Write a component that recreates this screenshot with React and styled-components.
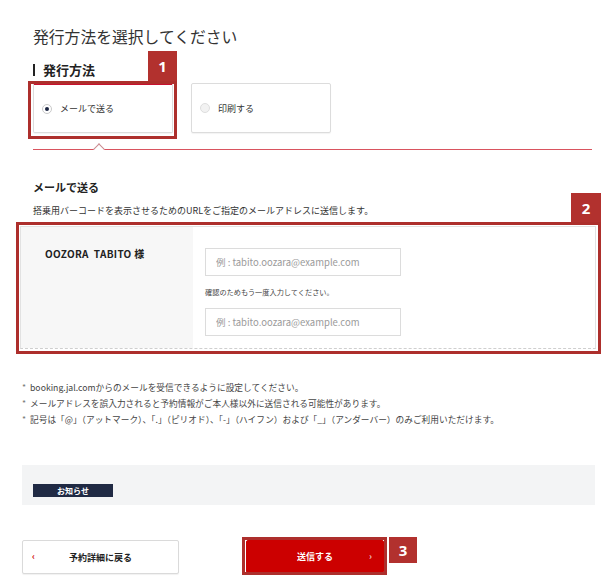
import styled, { createGlobalStyle } from "styled-components";

const GlobalStyle = createGlobalStyle`
  body {
    margin: 0;
    background: #fff;
    font-family: "Noto Sans CJK JP", "Noto Sans", sans-serif;
    color: #333;
  }
`;

const Page = styled.div`
  width: 616px;
  height: 582px;
  overflow: hidden;
  padding: 0 20px;
  box-sizing: border-box;
`;

const Header = styled.div`
  padding-left: 13px;
  padding-right: 4px;
`;

const Title = styled.h1`
  margin: 27px 0 0;
  font-size: 15.8px;
  line-height: 20px;
  font-weight: 400;
  color: #333;
`;

const SectionHeading = styled.h2`
  margin: 14px 0 0;
  display: flex;
  align-items: center;
  gap: 8px;
  font-size: 13px;
  line-height: 18px;
  font-weight: 700;
  color: #222;

  &::before {
    content: "";
    width: 2px;
    height: 12px;
    background: #222;
  }
`;

const CardRow = styled.div`
  margin-top: 4px;
  display: flex;
  gap: 18px;
`;

const Annotated = styled.div`
  position: relative;
`;

const Frame = styled.div`
  position: absolute;
  inset: ${(p) => p.$inset};
  border: 3px solid #ad2f2c;
  pointer-events: none;
`;

const Badge = styled.div`
  position: absolute;
  width: ${(p) => p.$w}px;
  height: ${(p) => p.$h}px;
  background: #b2312e;
  color: #fff;
  font-family: "Noto Sans", sans-serif;
  font-weight: 700;
  font-size: 15px;
  display: flex;
  align-items: center;
  justify-content: center;
  ${(p) => p.$pos}
`;

const MethodCard = styled.div`
  width: 140px;
  height: 50px;
  box-sizing: border-box;
  border: 1px solid #dcdcdc;
  border-top: ${(p) => (p.$selected ? "2px solid #c8102e" : "1px solid #dcdcdc")};
  border-radius: 2px;
  background: #fff;
  display: flex;
  align-items: center;
  padding-left: 8px;
  gap: 8px;
  font-size: 9px;
  color: #333;
  box-shadow: 0 1px 1px rgba(0, 0, 0, 0.05);
`;

const Radio = styled.span`
  width: 10px;
  height: 10px;
  border-radius: 50%;
  box-sizing: border-box;
  border: 1px solid ${(p) => (p.$checked ? "#c9c9c9" : "#dedede")};
  background: ${(p) => (p.$checked ? "#fff" : "#f2f2f2")};
  display: flex;
  align-items: center;
  justify-content: center;

  &::after {
    content: "";
    width: 4px;
    height: 4px;
    border-radius: 50%;
    background: ${(p) => (p.$checked ? "#1c2541" : "transparent")};
  }
`;

const Divider = styled.div`
  position: relative;
  margin-top: 16px;
  height: 1px;
  background: #d9545f;

  &::after {
    content: "";
    position: absolute;
    left: 62px;
    top: -4px;
    width: 7px;
    height: 7px;
    background: #fff;
    border-top: 1px solid #c98a8f;
    border-left: 1px solid #c98a8f;
    transform: rotate(45deg);
  }
`;

const SubHeading = styled.h3`
  margin: 30px 0 0;
  font-size: 11px;
  line-height: 14px;
  font-weight: 700;
  color: #222;
`;

const Description = styled.p`
  margin: 10px 0 0;
  font-size: 9px;
  line-height: 14px;
  color: #333;
`;

const FormBox = styled.div`
  margin-top: 8px;
  display: flex;
  border: 1px solid #e2e2e2;
  border-bottom: 1px dashed #cfcfcf;
  height: 123px;
  box-sizing: border-box;
`;

const NameCell = styled.div`
  width: 172px;
  background: #f7f7f7;
  padding: 20px 0 0 24px;
  box-sizing: border-box;
  font-size: 10px;
  line-height: 14px;
  font-weight: 700;
  color: #222;
  letter-spacing: 0.3px;
`;

const FieldCell = styled.div`
  flex: 1;
  padding: 21px 0 0 12px;
  background: #fff;
`;

const EmailInput = styled.input`
  display: block;
  width: 196px;
  height: 28px;
  box-sizing: border-box;
  border: 1px solid #dcdcdc;
  padding: 0 10px;
  font-family: "Noto Sans CJK JP", "Noto Sans", sans-serif;
  font-size: 9.5px;
  outline: none;

  &::placeholder {
    color: #9a9a9a;
  }
`;

const Hint = styled.p`
  margin: 0;
  padding: 10px 0 0;
  height: 32px;
  box-sizing: border-box;
  font-size: 7.2px;
  line-height: 12px;
  color: #444;
`;

const Notes = styled.ul`
  margin: 31px 0 0 2px;
  padding: 0;
  list-style: none;
`;

const Note = styled.li`
  font-size: 8.7px;
  line-height: 16px;
  color: #444;
  display: flex;

  &::before {
    content: "*";
    width: 8px;
    color: #777;
  }
`;

const NoticeBox = styled.div`
  margin: 37px 1px 0 2px;
  height: 40px;
  background: #f3f4f5;
  padding: 10px 0 0 11px;
  box-sizing: border-box;
`;

const NoticeLabel = styled.span`
  display: inline-flex;
  align-items: center;
  justify-content: center;
  width: 80px;
  height: 13px;
  background: #202a44;
  color: #fff;
  font-size: 8px;
  font-weight: 700;
`;

const ButtonRow = styled.div`
  margin: 35px 0 0 2px;
  display: flex;
  align-items: flex-start;
  gap: 67px;
`;

const Button = styled.button`
  position: relative;
  width: ${(p) => (p.$primary ? "138px" : "157px")};
  height: ${(p) => (p.$primary ? "33px" : "34px")};
  box-sizing: border-box;
  border: 1px solid ${(p) => (p.$primary ? "#c00" : "#dadada")};
  border-radius: 2px;
  background: ${(p) => (p.$primary ? "#cc0000" : "#fff")};
  color: ${(p) => (p.$primary ? "#fff" : "#222")};
  font-family: "Noto Sans CJK JP", "Noto Sans", sans-serif;
  font-size: 9px;
  font-weight: 700;
  display: flex;
  align-items: center;
  justify-content: center;
  padding: 0;
  box-shadow: 0 1px 1px rgba(0, 0, 0, 0.06);
`;

const Chevron = styled.span`
  position: absolute;
  top: 50%;
  transform: translateY(-55%);
  font-size: 9px;
  font-weight: 700;
  color: ${(p) => p.$color};
  ${(p) => (p.$side === "left" ? "left: 9px;" : "right: 11px;")}
`;

const App = () => {
  return (
    <>
      <GlobalStyle />
      <Page>
        <Header>
          <Title>発行方法を選択してください</Title>
          <SectionHeading>発行方法</SectionHeading>

          <CardRow>
            <Annotated>
              <MethodCard $selected>
                <Radio $checked />
                メールで送る
              </MethodCard>
              <Frame $inset="-2px -4px -6px -5px" />
              <Badge $w={29} $h={30} $pos="right: -4px; top: -32px;">
                1
              </Badge>
            </Annotated>
            <MethodCard>
              <Radio />
              印刷する
            </MethodCard>
          </CardRow>

          <Divider />

          <SubHeading>メールで送る</SubHeading>
          <Description>
            搭乗用バーコードを表示させるためのURLをご指定のメールアドレスに送信します。
          </Description>
        </Header>

        <Annotated>
          <FormBox>
            <NameCell>OOZORA&nbsp;&nbsp;TABITO 様</NameCell>
            <FieldCell>
              <EmailInput placeholder="例 : tabito.oozara@example.com" />
              <Hint>確認のためもう一度入力してください。</Hint>
              <EmailInput placeholder="例 : tabito.oozara@example.com" />
            </FieldCell>
          </FormBox>
          <Frame $inset="-4px -5px -5px -4px" />
          <Badge $w={30} $h={29} $pos="right: -5px; top: -33px;">
            2
          </Badge>
        </Annotated>

        <Notes>
          <Note>booking.jal.comからのメールを受信できるように設定してください。</Note>
          <Note>メールアドレスを誤入力されると予約情報がご本人様以外に送信される可能性があります。</Note>
          <Note>
            記号は「@」（アットマーク）、「.」（ピリオド）、「-」（ハイフン）および「_」（アンダーバー）のみご利用いただけます。
          </Note>
        </Notes>

        <NoticeBox>
          <NoticeLabel>お知らせ</NoticeLabel>
        </NoticeBox>

        <ButtonRow>
          <Button>
            <Chevron $side="left" $color="#c00">‹</Chevron>
            予約詳細に戻る
          </Button>
          <Annotated>
            <Button $primary>
              送信する
              <Chevron $side="right" $color="#f3c0c0">›</Chevron>
            </Button>
            <Frame $inset="-3px -3px -2px -4px" />
            <Badge $w={28} $h={26} $pos="left: calc(100% + 5px); top: -3px;">
              3
            </Badge>
          </Annotated>
        </ButtonRow>
      </Page>
    </>
  );
};

export default App;
